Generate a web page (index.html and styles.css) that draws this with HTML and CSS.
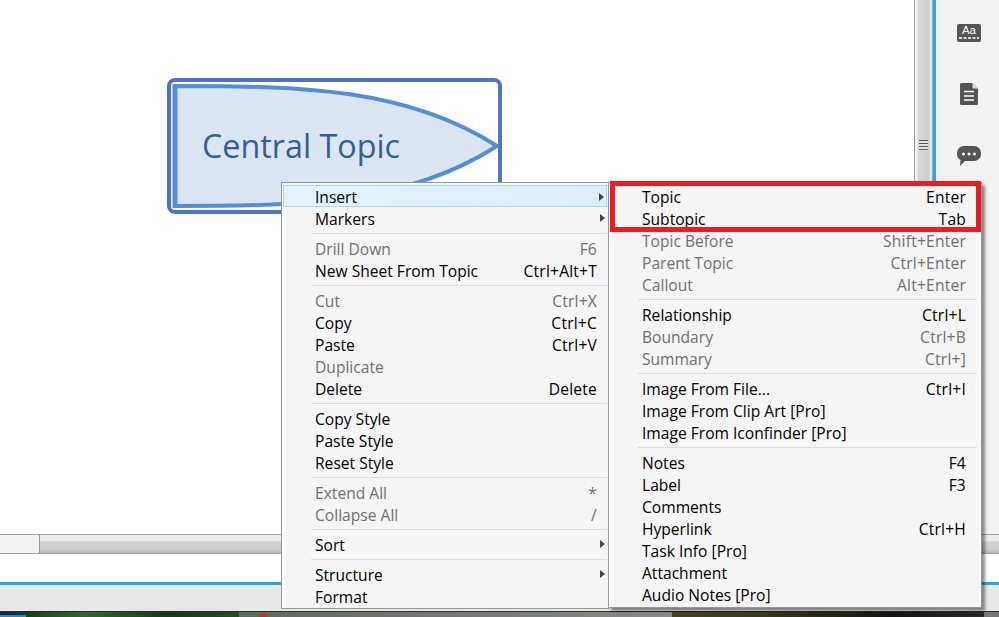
FILE: index.html
```html
<!DOCTYPE html>
<html lang="en">
<head>
  <meta charset="UTF-8">
  <title>Central Topic</title>
  <link rel="stylesheet" href="styles.css">
</head>
<body>
  <div class="window">
    <div class="main">
      <div class="canvas">
        <div class="topic-frame">
          <svg class="topic-shape" width="330" height="130" viewBox="0 0 330 130">
            <path d="M3 4 C130 4 235 6 325 64 C235 122 130 124 3 124 Z" fill="#dce6f2" stroke="#558ed5" stroke-width="4"/>
            <path d="M3 2V126" stroke="#558ed5" stroke-width="5"/>
          </svg>
          <span class="topic-label">Central Topic</span>
        </div>
      </div>
      <div class="vscroll">
        <div class="vscroll-thumb"><span class="grip"></span></div>
      </div>
      <div class="side">
        <svg width="24" height="18" viewBox="0 0 24 18">
          <rect width="24" height="18" rx="2" fill="#555"/>
          <text x="12" y="10" class="aa">Aa</text>
          <path d="M2 14h20" stroke="#fff" stroke-width="1.5" stroke-dasharray="3 1.5"/>
        </svg>
        <svg width="18" height="22" viewBox="0 0 18 22">
          <path d="M1.5 0H12L18 6V20.5A1.5 1.5 0 0 1 16.5 22H1.5A1.5 1.5 0 0 1 0 20.5V1.5A1.5 1.5 0 0 1 1.5 0Z" fill="#555"/>
          <path d="M12.5 0.5V5.5H17.5Z" fill="#ddd"/>
          <path d="M4 8.5H14M4 13H14M4 17H14" stroke="#fff" stroke-width="1.3"/>
        </svg>
        <svg width="24" height="20" viewBox="0 0 24 20">
          <path d="M7 0H17A7 7 0 0 1 24 7V8A7 7 0 0 1 17 15H8L3 20L3.5 14A7 7 0 0 1 0 8V7A7 7 0 0 1 7 0Z" fill="#555"/>
          <circle cx="6.5" cy="8" r="1.5" fill="#fff"/>
          <circle cx="12" cy="8" r="1.5" fill="#fff"/>
          <circle cx="17.5" cy="8" r="1.5" fill="#fff"/>
        </svg>
      </div>
    </div>
    <div class="hscroll"><div class="hscroll-thumb"></div></div>
    <div class="gap"></div>
    <div class="status"></div>
    <div class="taskbar">
      <span class="task task-a"></span>
      <span class="task task-b"></span>
      <span class="task task-c"></span>
      <span class="task task-d"></span>
    </div>
  </div>

  <ul class="menu menu-main">
    <li class="item active"><span>Insert</span><i class="arrow"></i></li>
    <li class="item"><span>Markers</span><i class="arrow"></i></li>
    <li class="sep"></li>
    <li class="item off"><span>Drill Down</span><span>F6</span></li>
    <li class="item"><span>New Sheet From Topic</span><span>Ctrl+Alt+T</span></li>
    <li class="sep"></li>
    <li class="item off"><span>Cut</span><span>Ctrl+X</span></li>
    <li class="item"><span>Copy</span><span>Ctrl+C</span></li>
    <li class="item"><span>Paste</span><span>Ctrl+V</span></li>
    <li class="item off"><span>Duplicate</span></li>
    <li class="item"><span>Delete</span><span>Delete</span></li>
    <li class="sep"></li>
    <li class="item"><span>Copy Style</span></li>
    <li class="item"><span>Paste Style</span></li>
    <li class="item"><span>Reset Style</span></li>
    <li class="sep"></li>
    <li class="item off"><span>Extend All</span><span>*</span></li>
    <li class="item off"><span>Collapse All</span><span>/</span></li>
    <li class="sep"></li>
    <li class="item"><span>Sort</span><i class="arrow"></i></li>
    <li class="sep"></li>
    <li class="item"><span>Structure</span><i class="arrow"></i></li>
    <li class="item"><span>Format</span></li>
  </ul>

  <ul class="menu menu-sub">
    <li class="item"><span>Topic</span><span>Enter</span></li>
    <li class="item"><span>Subtopic</span><span>Tab</span></li>
    <li class="item off"><span>Topic Before</span><span>Shift+Enter</span></li>
    <li class="item off"><span>Parent Topic</span><span>Ctrl+Enter</span></li>
    <li class="item off"><span>Callout</span><span>Alt+Enter</span></li>
    <li class="sep"></li>
    <li class="item"><span>Relationship</span><span>Ctrl+L</span></li>
    <li class="item off"><span>Boundary</span><span>Ctrl+B</span></li>
    <li class="item off"><span>Summary</span><span>Ctrl+]</span></li>
    <li class="sep"></li>
    <li class="item"><span>Image From File...</span><span>Ctrl+I</span></li>
    <li class="item"><span>Image From Clip Art [Pro]</span></li>
    <li class="item"><span>Image From Iconfinder [Pro]</span></li>
    <li class="sep"></li>
    <li class="item"><span>Notes</span><span>F4</span></li>
    <li class="item"><span>Label</span><span>F3</span></li>
    <li class="item"><span>Comments</span></li>
    <li class="item"><span>Hyperlink</span><span>Ctrl+H</span></li>
    <li class="item"><span>Task Info [Pro]</span></li>
    <li class="item"><span>Attachment</span></li>
    <li class="item"><span>Audio Notes [Pro]</span></li>
  </ul>

  <div class="highlight"></div>
</body>
</html>
```

FILE: styles.css
```css
html, body {
  margin: 0;
  height: 100%;
  overflow: hidden;
}
body {
  font-family: "Open Sans", "Noto Sans", sans-serif;
  background-color: #fff;
  color: #000;
}
.window {
  width: 999px;
  height: 617px;
  display: flex;
  flex-direction: column;
}
.main {
  height: 534px;
  display: flex;
}
.canvas {
  width: 914px;
  background-color: #fff;
  padding: 78px 0 0 167px;
  box-sizing: border-box;
}
.topic-frame {
  position: relative;
  width: 327px;
  height: 128px;
  border: 4px solid #4f74c4;
  border-radius: 8px;
}
.topic-shape {
  position: absolute;
  left: 1px;
  top: 0;
}
.topic-label {
  position: absolute;
  left: 31px;
  top: 43px;
  font-size: 32.3px;
  line-height: 40px;
  color: #366092;
}
.vscroll {
  width: 19px;
  background-color: #f0f0f0;
  border-left: 1px solid #a0a0a0;
  box-sizing: border-box;
}
.vscroll-thumb {
  height: 100%;
  width: 18px;
  background: linear-gradient(to right, #f2f2f2 12%, #d8d8da 18%, #cfcfd1 78%, #e2e2e4 84%, #e2e2e4 92%, #a0a0a0 94%);
  position: relative;
}
.grip {
  position: absolute;
  left: 4px;
  top: 140px;
  width: 9px;
  height: 11px;
  background: repeating-linear-gradient(to bottom, #555 0, #555 1px, #e4e4e4 1px, #e4e4e4 3px);
}
.side {
  flex: 1;
  background-color: #f3f3f3;
  border-left: 3px solid #2ea3dc;
  display: flex;
  flex-direction: column;
  align-items: center;
  padding: 24px 0 0 3px;
  gap: 41px;
}
.aa {
  font-size: 11.5px;
  fill: #fff;
  text-anchor: middle;
  font-family: "Liberation Sans", sans-serif;
}
.hscroll {
  height: 20px;
  background-color: #f0f0f0;
  border-top: 1px solid #a0a0a0;
  border-bottom: 1px solid #a0a0a0;
  box-sizing: border-box;
  padding-left: 39px;
}
.hscroll-thumb {
  height: 18px;
  border-left: 1px solid #999;
  background: linear-gradient(to bottom, #ececec 33%, #d4d4d6 38%, #cacacc 88%, #b0b0b0);
}
.gap {
  height: 28px;
  background-color: #fff;
}
.status {
  height: 29px;
  box-sizing: border-box;
  background-color: #e8e8e8;
  border-top: 3px solid #2ea3dc;
}
.taskbar {
  height: 6px;
  border-top: 1px solid #2c2c2c;
  box-sizing: border-box;
  display: flex;
}
.task {
  display: block;
  height: 5px;
}
.task-a {
  width: 239px;
  background:
    linear-gradient(to right, #1a8cf0 26px, transparent 26px) no-repeat left bottom / 100% 2px,
    linear-gradient(to right, #10261a, #2f6a2a 35%, #173a1a 70%, #244e22);
}
.task-b {
  width: 433px;
  background:
    radial-gradient(circle at 24px 100%, #c0302c 3px, transparent 5px),
    linear-gradient(to right, #5a6a58, #8a8a88);
}
.task-c {
  width: 312px;
  background: linear-gradient(to right, #4a4220, #3a3a1c 30%, #14140e 70%, #2a2a2a);
}
.task-d {
  flex: 1;
  background-color: #777;
}
.menu {
  position: absolute;
  top: 182px;
  margin: 0;
  padding: 2px 1px 0;
  list-style: none;
  box-sizing: border-box;
  background: linear-gradient(to right, #fff, #f5f5f5 5px);
  border: 1px solid #979797;
  font-size: 15.6px;
}
.menu-main {
  left: 281px;
  width: 328px;
  height: 427px;
}
.menu-sub {
  left: 608px;
  width: 374px;
  height: 426px;
  box-shadow: 3px 3px 3px rgba(0, 0, 0, 0.45);
}
.item {
  height: 22px;
  line-height: 24px;
  box-sizing: border-box;
  display: flex;
  justify-content: space-between;
  padding: 0 10px 0 32px;
  position: relative;
}
.menu-sub .item {
  padding: 0 14px 0 32px;
}
.item span + span {
  letter-spacing: 0.2px;
}
.off {
  color: #707070;
}
.active {
  background: linear-gradient(to right, #e4f1f9, #deeef8);
  border: 1px solid #a8d8f0;
  line-height: 22px;
  padding-left: 31px;
}
.sep {
  height: 1px;
  margin: 4px 0 3px 28px;
  background-color: #dcdcdc;
}
.menu-sub .sep {
  margin-right: 3px;
}
.arrow {
  position: absolute;
  right: 2px;
  top: 7px;
  border-left: 5px solid #444;
  border-top: 4px solid transparent;
  border-bottom: 4px solid transparent;
}
.highlight {
  position: absolute;
  left: 610px;
  top: 181px;
  width: 371px;
  height: 51px;
  box-sizing: border-box;
  border: 5px solid #ed1c24;
}
```
